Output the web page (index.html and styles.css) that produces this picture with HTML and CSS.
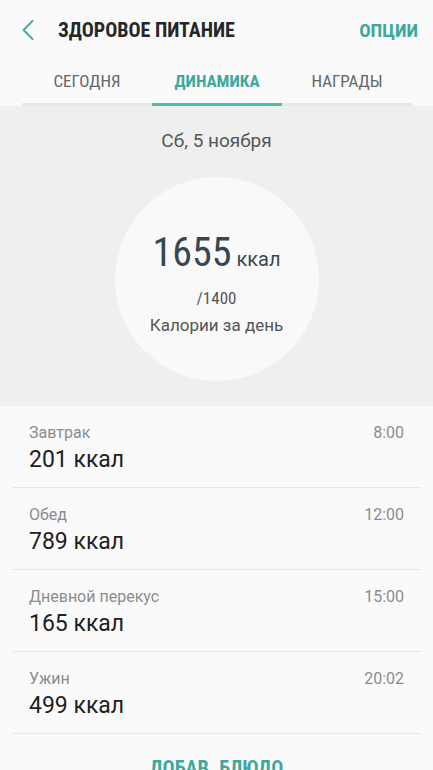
FILE: index.html
```html
<!DOCTYPE html>
<html lang="ru">
<head>
    <meta charset="UTF-8">
    <meta name="viewport" content="width=device-width, initial-scale=1.0">
    <title>Здоровое питание</title>
    <link rel="stylesheet" href="styles.css">
</head>
<body>

    <div class="app">
        <header class="topbar">
            <button class="back" aria-label="Назад">
                <svg width="12" height="20" viewBox="0 0 12 20">
                    <path d="M10.5 1 L1.5 10 L10.5 19" fill="none" stroke="#3fa89d" stroke-width="1.8" stroke-linecap="round" stroke-linejoin="round"/>
                </svg>
            </button>
            <h1 class="title">ЗДОРОВОЕ ПИТАНИЕ</h1>
            <span class="options">ОПЦИИ</span>
        </header>

        <nav class="tabs">
            <span class="tab">СЕГОДНЯ</span>
            <span class="tab active">ДИНАМИКА</span>
            <span class="tab">НАГРАДЫ</span>
        </nav>

        <section class="summary">
            <p class="date">Сб, 5 ноября</p>
            <div class="circle">
                <div class="total"><span class="big">1655</span><span class="unit">ккал</span></div>
                <div class="goal">/1400</div>
                <div class="caption">Калории за день</div>
            </div>
        </section>

        <ul class="meals">
            <li class="meal">
                <div class="meal-head"><span>Завтрак</span><span>8:00</span></div>
                <div class="meal-kcal">201 ккал</div>
            </li>
            <li class="meal">
                <div class="meal-head"><span>Обед</span><span>12:00</span></div>
                <div class="meal-kcal">789 ккал</div>
            </li>
            <li class="meal">
                <div class="meal-head"><span>Дневной перекус</span><span>15:00</span></div>
                <div class="meal-kcal">165 ккал</div>
            </li>
            <li class="meal">
                <div class="meal-head"><span>Ужин</span><span>20:02</span></div>
                <div class="meal-kcal">499 ккал</div>
            </li>
        </ul>

        <div class="add">ДОБАВ. БЛЮДО</div>
    </div>

</body>
</html>
```

FILE: styles.css
```css
body {
    margin: 0;
    font-family: Roboto, "Noto Sans", sans-serif;
    background: #fafafa;
    color: #212121;
}
.app {
    width: 433px;
    height: 770px;
    overflow: hidden;
}
.topbar {
    display: flex;
    align-items: center;
    height: 60px;
    padding: 0 15px 0 22px;
}
.back {
    background: none;
    border: none;
    padding: 0;
    width: 12px;
    height: 20px;
    margin-top: -1px;
}
.title {
    margin: 0 0 0 24px;
    font-family: "Roboto Condensed", "Liberation Sans Narrow", Roboto, sans-serif;
    font-size: 20px;
    font-weight: bold;
    color: #262626;
    flex: 1;
}
.options {
    font-family: "Roboto Condensed", "Liberation Sans Narrow", Roboto, sans-serif;
    font-size: 19px;
    font-weight: bold;
    color: #3fa89d;
}
.tabs {
    display: flex;
    margin: 0 21px 0 22px;
    border-bottom: 3px solid #e8e8e8;
    height: 43px;
}
.tab {
    flex: 1;
    text-align: center;
    font-family: "Roboto Condensed", "Liberation Sans Narrow", Roboto, sans-serif;
    font-size: 17px;
    color: #666;
    line-height: 43px;
    margin-bottom: -3px;
    border-bottom: 3px solid transparent;
}
.tab.active {
    color: #3fa89d;
    font-weight: bold;
    border-bottom-color: #4bbcae;
}
.summary {
    background: #efefef;
    height: 299px;
    padding-top: 1px;
    display: flex;
    flex-direction: column;
    align-items: center;
}
.date {
    margin: 23px 0 0;
    font-size: 19px;
    line-height: 22px;
    color: #555;
}
.circle {
    margin-top: 25px;
    width: 204px;
    height: 204px;
    border-radius: 50%;
    background: #f9f9f9;
    display: flex;
    flex-direction: column;
    align-items: center;
}
.total {
    margin-top: 52px;
    display: flex;
    align-items: baseline;
    color: #37474f;
}
.big {
    font-family: "Roboto Condensed", "Liberation Sans Narrow", Roboto, sans-serif;
    font-size: 40px;
    line-height: 48px;
}
.unit {
    font-size: 20px;
    margin-left: 5px;
}
.goal {
    margin-top: 11px;
    font-family: "Roboto Condensed", "Liberation Sans Narrow", Roboto, sans-serif;
    font-size: 17px;
    color: #555;
}
.caption {
    margin-top: 7px;
    font-size: 17px;
    color: #555;
}
.meals {
    list-style: none;
    margin: 0 12px;
    padding: 0;
}
.meal {
    padding: 17px 17px 13px;
    border-bottom: 1px solid #e8e8e8;
}
.meal-head {
    display: flex;
    justify-content: space-between;
    font-size: 16px;
    line-height: 20px;
    color: #8c8c8c;
}
.meal-kcal {
    margin-top: 2px;
    font-size: 23px;
    line-height: 29px;
}
.add {
    text-align: center;
    padding-top: 22px;
    font-family: "Roboto Condensed", "Liberation Sans Narrow", Roboto, sans-serif;
    font-size: 20px;
    font-weight: bold;
    color: #3fa89d;
}
```
